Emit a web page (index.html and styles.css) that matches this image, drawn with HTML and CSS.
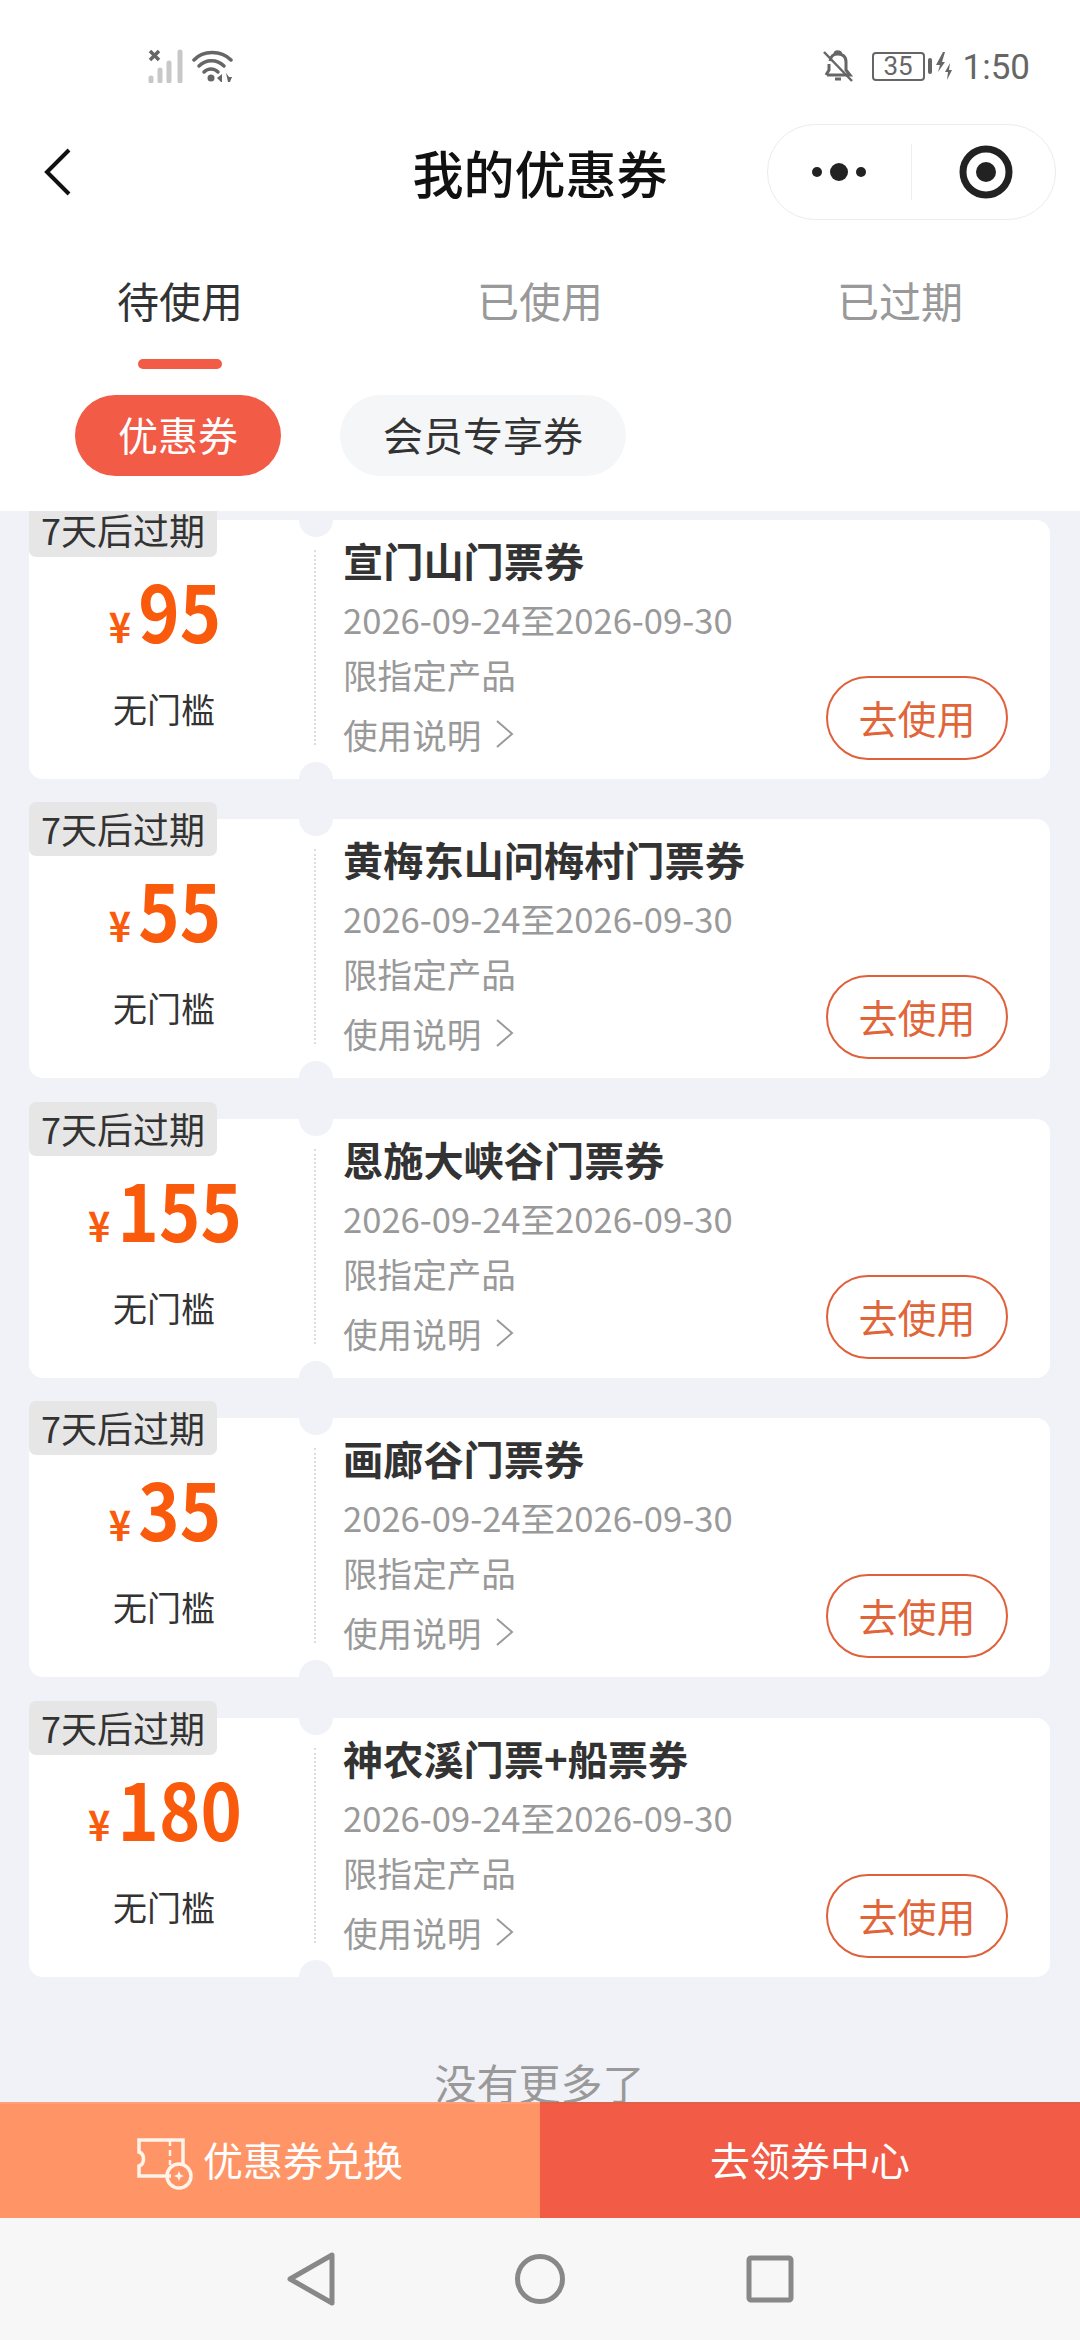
FILE: index.html
```html
<!DOCTYPE html>
<html lang="zh-CN">
<head>
  <meta charset="UTF-8">
  <meta name="viewport" content="width=device-width, initial-scale=1.0">
  <title>我的优惠券</title>
  <link rel="stylesheet" href="styles.css">
</head>
<body>
  <div class="page">
    <header class="top">
      <div class="statusbar">
        <div class="status-left">
          <svg width="37" height="34" viewBox="0 0 37 34">
            <g stroke="#c8c8c8" stroke-width="5" stroke-linecap="round">
              <path d="M4 29v3M13 21v11M22 14v18M33 3v29"/>
            </g>
            <path d="M3 2l9 9M12 2l-9 9" stroke="#666" stroke-width="3.5" fill="none"/>
          </svg>
          <svg width="42" height="34" viewBox="0 0 42 34" fill="none">
            <g stroke="#666" stroke-width="3.5" stroke-linecap="round">
              <path d="M2 11C11 1 29 1 39 11"/>
              <path d="M7 17C14 10 25 10 32 17"/>
              <path d="M12 23C16 19 22 19 26 23"/>
            </g>
            <circle cx="19" cy="29" r="3.5" fill="#666"/>
            <path d="M30 25v8h-1l-4-4zM34 24l3 4 3 0-2 5h-2z" fill="#666"/>
          </svg>
        </div>
        <div class="status-right">
          <svg width="33" height="34" viewBox="0 0 33 34" fill="none" stroke="#666" stroke-width="3">
            <path d="M8 12C9 6 12 5 16 5s8 2 8 8v8l4 5H5"/>
            <path d="M7 15v6l-3 5" />
            <path d="M13 5c0-3 5-3 6 0M13 30h6"/>
            <path d="M2 3l28 29" stroke-width="2.5"/>
          </svg>
          <div class="battery"><span class="battery-num">35</span></div>
          <span class="battery-cap"></span>
          <svg class="bolt" width="18" height="30" viewBox="0 0 18 30">
            <path d="M8 1L1 14h4l-2 7 7-10H7l3-10zM15 12l-5 9h3l-1 8 5-10h-3l1-7z" fill="#666"/>
          </svg>
          <span class="clock">1:50</span>
        </div>
      </div>

      <div class="navbar">
        <svg class="back" width="30" height="48" viewBox="0 0 30 48" fill="none">
          <path d="M26 2L4 24l22 22" stroke="#111" stroke-width="4"/>
        </svg>
        <h1 class="title">我的优惠券</h1>
        <div class="capsule">
          <svg width="56" height="20" viewBox="0 0 56 20">
            <circle cx="6" cy="10" r="5" fill="#222"/>
            <circle cx="28" cy="10" r="9" fill="#222"/>
            <circle cx="50" cy="10" r="5" fill="#222"/>
          </svg>
          <span class="capsule-line"></span>
          <svg width="54" height="54" viewBox="0 0 54 54" fill="none">
            <circle cx="27" cy="27" r="23" stroke="#222" stroke-width="7"/>
            <circle cx="27" cy="27" r="10" fill="#222"/>
          </svg>
        </div>
      </div>

      <ul class="tabs">
        <li class="tab active">待使用</li>
        <li class="tab">已使用</li>
        <li class="tab">已过期</li>
      </ul>

      <div class="pills">
        <span class="pill active">优惠券</span>
        <span class="pill">会员专享券</span>
      </div>
    </header>

    <main class="list">
      <div class="coupon">
        <span class="badge">7天后过期</span>
        <div class="coupon-left">
          <div class="amount"><span class="yen">¥</span><span class="num">95</span></div>
          <div class="limit">无门槛</div>
        </div>
        <div class="coupon-right">
          <div class="name">宣门山门票券</div>
          <div class="date">2026-09-24至2026-09-30</div>
          <div class="coupon-bottom">
            <div>
              <div class="scope">限指定产品</div>
              <div class="usage">使用说明<svg width="20" height="30" viewBox="0 0 20 30" fill="none"><path d="M2 2l15 13L2 28" stroke="#999" stroke-width="2"/></svg></div>
            </div>
            <span class="use-btn">去使用</span>
          </div>
        </div>
      </div>

      <div class="coupon">
        <span class="badge">7天后过期</span>
        <div class="coupon-left">
          <div class="amount"><span class="yen">¥</span><span class="num">55</span></div>
          <div class="limit">无门槛</div>
        </div>
        <div class="coupon-right">
          <div class="name">黄梅东山问梅村门票券</div>
          <div class="date">2026-09-24至2026-09-30</div>
          <div class="coupon-bottom">
            <div>
              <div class="scope">限指定产品</div>
              <div class="usage">使用说明<svg width="20" height="30" viewBox="0 0 20 30" fill="none"><path d="M2 2l15 13L2 28" stroke="#999" stroke-width="2"/></svg></div>
            </div>
            <span class="use-btn">去使用</span>
          </div>
        </div>
      </div>

      <div class="coupon">
        <span class="badge">7天后过期</span>
        <div class="coupon-left">
          <div class="amount"><span class="yen">¥</span><span class="num">155</span></div>
          <div class="limit">无门槛</div>
        </div>
        <div class="coupon-right">
          <div class="name">恩施大峡谷门票券</div>
          <div class="date">2026-09-24至2026-09-30</div>
          <div class="coupon-bottom">
            <div>
              <div class="scope">限指定产品</div>
              <div class="usage">使用说明<svg width="20" height="30" viewBox="0 0 20 30" fill="none"><path d="M2 2l15 13L2 28" stroke="#999" stroke-width="2"/></svg></div>
            </div>
            <span class="use-btn">去使用</span>
          </div>
        </div>
      </div>

      <div class="coupon">
        <span class="badge">7天后过期</span>
        <div class="coupon-left">
          <div class="amount"><span class="yen">¥</span><span class="num">35</span></div>
          <div class="limit">无门槛</div>
        </div>
        <div class="coupon-right">
          <div class="name">画廊谷门票券</div>
          <div class="date">2026-09-24至2026-09-30</div>
          <div class="coupon-bottom">
            <div>
              <div class="scope">限指定产品</div>
              <div class="usage">使用说明<svg width="20" height="30" viewBox="0 0 20 30" fill="none"><path d="M2 2l15 13L2 28" stroke="#999" stroke-width="2"/></svg></div>
            </div>
            <span class="use-btn">去使用</span>
          </div>
        </div>
      </div>

      <div class="coupon">
        <span class="badge">7天后过期</span>
        <div class="coupon-left">
          <div class="amount"><span class="yen">¥</span><span class="num">180</span></div>
          <div class="limit">无门槛</div>
        </div>
        <div class="coupon-right">
          <div class="name">神农溪门票+船票券</div>
          <div class="date">2026-09-24至2026-09-30</div>
          <div class="coupon-bottom">
            <div>
              <div class="scope">限指定产品</div>
              <div class="usage">使用说明<svg width="20" height="30" viewBox="0 0 20 30" fill="none"><path d="M2 2l15 13L2 28" stroke="#999" stroke-width="2"/></svg></div>
            </div>
            <span class="use-btn">去使用</span>
          </div>
        </div>
      </div>

      <div class="no-more">没有更多了</div>
    </main>

    <div class="actions">
      <div class="action action-exchange">
        <svg class="exchange-icon" width="58" height="52" viewBox="0 0 58 52" fill="none" stroke="#fff3ea" stroke-width="3.5">
          <path d="M36 38H4v-10c6-2 6-12 0-14V2h44v24"/>
          <path d="M35 3v5M35 12v6M35 22v5" stroke-width="2.5"/>
          <circle cx="44" cy="38" r="12"/>
          <path d="M44 33l1.500 3.500L49 38l-3.500 1.500L44 43l-1.500-3.500L39 38l3.500-1.500z" fill="#fff3ea" stroke="none"/>
        </svg>
        <span>优惠券兑换</span>
      </div>
      <div class="action action-center">去领券中心</div>
    </div>

    <nav class="sysnav">
      <svg width="48" height="54" viewBox="0 0 48 54" fill="none" stroke="#888" stroke-width="5" stroke-linejoin="round">
        <path d="M45 3v48L3 27z"/>
      </svg>
      <svg width="54" height="54" viewBox="0 0 54 54" fill="none" stroke="#888" stroke-width="5">
        <circle cx="27" cy="27" r="22.500"/>
      </svg>
      <svg width="50" height="50" viewBox="0 0 50 50" fill="none" stroke="#888" stroke-width="5" stroke-linejoin="round">
        <rect x="4" y="4" width="42" height="42" rx="2"/>
      </svg>
    </nav>
  </div>
</body>
</html>
```

FILE: styles.css
```css
* { box-sizing: border-box; }
body {
  margin: 0;
  font-family: "Noto Sans CJK SC", "Noto Sans", sans-serif;
  background-color: #f1f2f7;
  color: #333;
}
ul { margin: 0; padding: 0; list-style: none; }
.page {
  width: 1080px;
  height: 2340px;
  display: flex;
  flex-direction: column;
  overflow: hidden;
}

/* top part */
.top {
  height: 511px;
  background-color: #fff;
  position: relative;
  z-index: 2;
  flex: none;
}
.statusbar {
  height: 124px;
  padding: 49px 50px 0 147px;
  display: flex;
  justify-content: space-between;
  align-items: flex-start;
}
.status-left { display: flex; gap: 8px; }
.status-right { display: flex; align-items: center; height: 34px; }
.battery {
  width: 53px;
  height: 29px;
  margin-left: 17px;
  border: 2px solid #666;
  border-radius: 4px;
  text-align: center;
  font: 26px/25px Roboto, sans-serif;
  color: #666;
}
.battery-cap {
  width: 4px;
  height: 16px;
  margin-left: 3px;
  background-color: #666;
  border-radius: 2px;
}
.bolt { margin-left: 3px; }
.clock {
  margin-left: 10px;
  padding-top: 4px;
  font: 35px/34px Roboto, sans-serif;
  color: #666;
}
.navbar {
  height: 96px;
  padding: 0 24px;
  display: grid;
  grid-template-columns: 1fr auto 1fr;
  align-items: center;
}
.back { display: block; margin-left: 19px; }
.title {
  margin: 0;
  font-size: 51px;
  font-weight: 500;
  line-height: 96px;
  color: #111;
}
.capsule {
  width: 289px;
  height: 96px;
  justify-self: end;
  border: 1px solid #ececec;
  border-radius: 48px;
  display: flex;
  align-items: center;
  padding-left: 43px;
}
.capsule-line {
  width: 1px;
  height: 56px;
  margin: 0 47px 0 44px;
  background-color: #eee;
}
.tabs { display: flex; margin-top: 55px; height: 120px; }
.tab {
  width: 360px;
  text-align: center;
  font-size: 42px;
  line-height: 50px;
  color: #999;
  position: relative;
}
.tab.active { color: #333; }
.tab.active::after {
  content: "";
  position: absolute;
  left: 138px;
  top: 84px;
  width: 84px;
  height: 10px;
  border-radius: 5px;
  background-color: #f25b46;
}
.pills {
  display: flex;
  gap: 59px;
  padding-left: 75px;
}
.pill {
  height: 81px;
  padding: 0 43px;
  border-radius: 41px;
  background-color: #f5f6f8;
  font-size: 40px;
  line-height: 79px;
}
.pill.active { background-color: #f25b46; color: #fff; }

/* coupons */
.list {
  flex: 1;
  min-height: 0;
  overflow: hidden;
  padding: 9px 30px 0 29px;
}
.coupon {
  height: 259px;
  margin-bottom: 40.4px;
  background-color: #fff;
  border-radius: 14px;
  display: flex;
  position: relative;
}
.coupon::before,
.coupon::after {
  content: "";
  position: absolute;
  left: 270px;
  width: 34px;
  height: 34px;
  border-radius: 50%;
  background-color: #f1f2f7;
}
.coupon::before { top: -17px; }
.coupon::after { bottom: -17px; }
.badge {
  position: absolute;
  left: 0;
  top: -17px;
  width: 188px;
  height: 54px;
  border-radius: 7px;
  background-color: #e6e6e6;
  text-align: center;
  font-size: 36px;
  line-height: 52px;
}
.coupon-left {
  width: 287px;
  height: 195px;
  margin-top: 30px;
  padding: 14px 13px 0 0;
  border-right: 2px dotted #ddd;
  flex: none;
  text-align: center;
}
.amount {
  height: 90px;
  line-height: 90px;
  color: #fa5a0c;
  display: flex;
  justify-content: center;
  align-items: baseline;
  transform: scaleX(.9);
}
.yen { font-size: 42px; font-weight: 700; margin-right: 8px; }
.num { font-size: 78px; font-weight: 700; }
.limit {
  margin-top: 33px;
  padding-right: 2px;
  font-size: 34px;
  line-height: 44px;
}
.coupon-right {
  flex: 1;
  min-width: 0;
  padding: 15px 42px 0 27px;
}
.name {
  font-size: 40.2px;
  font-weight: 700;
  line-height: 50px;
}
.date {
  margin-top: 12px;
  font-size: 34.6px;
  line-height: 44px;
  color: #999;
}
.coupon-bottom {
  margin-top: 11px;
  display: flex;
  justify-content: space-between;
  align-items: flex-end;
}
.scope {
  font-size: 34.6px;
  line-height: 44px;
  color: #999;
}
.usage {
  margin-top: 16px;
  font-size: 34.6px;
  line-height: 44px;
  color: #999;
  display: flex;
  align-items: center;
  gap: 14px;
}
.use-btn {
  width: 182px;
  height: 84px;
  margin-bottom: -4px;
  border: 2px solid #e0603a;
  border-radius: 42px;
  color: #e0663a;
  text-align: center;
  font-size: 39px;
  line-height: 78px;
}
.no-more {
  margin-top: 80px;
  text-align: center;
  font-size: 42px;
  line-height: 50px;
  color: #999;
}

/* bottom */
.actions {
  height: 116px;
  flex: none;
  display: flex;
  position: relative;
  z-index: 2;
  color: #fff;
  font-size: 40px;
}
.action {
  width: 540px;
  display: flex;
  align-items: center;
  justify-content: center;
  padding-bottom: 4px;
  border-top: 2px solid #e0604c;
}
.action-exchange {
  background-color: #ff9567;
  border-top-color: #ffa07a;
  gap: 10px;
  padding-right: 2px;
}
.exchange-icon { margin-top: 10px; }
.action-center { background-color: #f25b46; }
.sysnav {
  height: 122px;
  flex: none;
  background-color: #f7f7f7;
  position: relative;
  z-index: 2;
  display: flex;
  align-items: center;
  justify-content: center;
  gap: 178px;
  padding-left: 2px;
}
.sysnav svg { display: block; }
```
